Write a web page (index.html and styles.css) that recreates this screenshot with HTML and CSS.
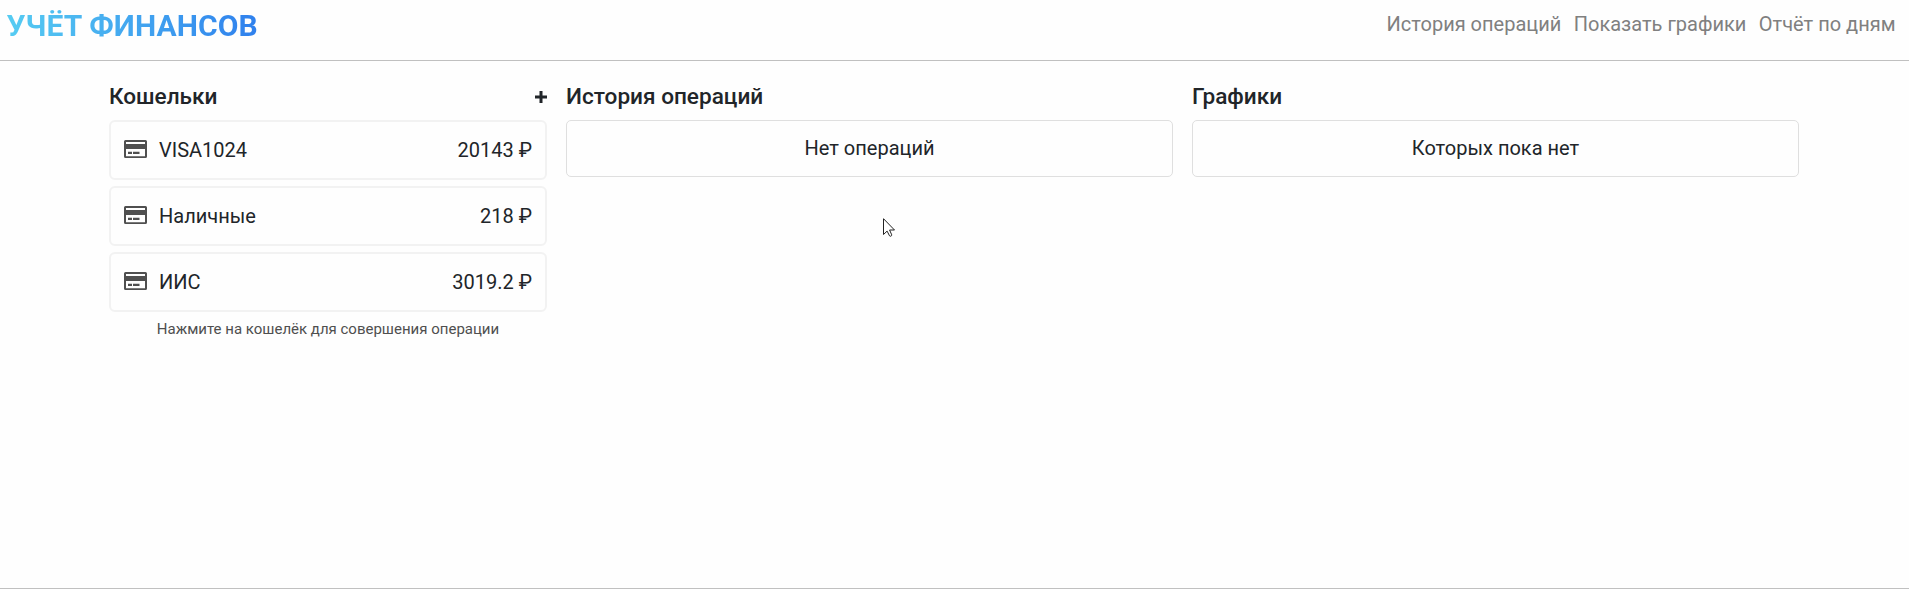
FILE: index.html
```html
<!DOCTYPE html>
<html lang="ru">
<head>
<meta charset="utf-8">
<title>Учёт финансов</title>
<link rel="stylesheet" href="styles.css">
</head>
<body>
<svg class="sprite" aria-hidden="true">
  <symbol id="card" viewBox="0 0 23 18">
    <path fill-rule="evenodd" d="M1.500 0h20A1.500 1.500 0 0 1 23 1.500v15a1.500 1.500 0 0 1-1.500 1.500h-20A1.500 1.500 0 0 1 0 16.500v-15A1.500 1.500 0 0 1 1.500 0ZM2 2v2h19V2ZM2 9v7.200h19V9ZM4 11.700h4v2.200H4ZM9 11.700h6.500v2.200H9Z"/>
  </symbol>
</svg>
<header class="header">
  <div class="logo">УЧЁТ ФИНАНСОВ</div>
  <nav class="nav">
    <a class="nav-link">История операций</a>
    <a class="nav-link">Показать графики</a>
    <a class="nav-link">Отчёт по дням</a>
  </nav>
</header>
<main class="main">
  <section>
    <div class="head">
      <h2 class="title">Кошельки</h2>
      <svg class="plus" viewBox="0 0 12 12"><path d="M4.500 0h3v4.500H12v3H7.500V12h-3V7.500H0v-3h4.500Z"/></svg>
    </div>
    <div class="wallets">
      <div class="wallet"><svg class="card"><use href="#card"/></svg><span class="name">VISA1024</span><span>20143 ₽</span></div>
      <div class="wallet"><svg class="card"><use href="#card"/></svg><span class="name">Наличные</span><span>218 ₽</span></div>
      <div class="wallet"><svg class="card"><use href="#card"/></svg><span class="name">ИИС</span><span>3019.2 ₽</span></div>
    </div>
    <p class="hint">Нажмите на кошелёк для совершения операции</p>
  </section>
  <section>
    <div class="head"><h2 class="title">История операций</h2></div>
    <div class="panel">Нет операций</div>
  </section>
  <section>
    <div class="head"><h2 class="title">Графики</h2></div>
    <div class="panel">Которых пока нет</div>
  </section>
</main>
<footer class="footer"></footer>
<svg class="cursor" viewBox="0 0 12 19"><path d="M.5.7v15.800l3.600-3.400 2.400 4.700c.8 1 2.500.2 2.200-1L6.600 12h4.900Z"/></svg>
</body>
</html>
```

FILE: styles.css
```css
* { box-sizing: border-box; }
body {
  margin: 0;
  height: 589px;
  display: flex;
  flex-direction: column;
  overflow: hidden;
  background: #fefefe;
  color: #212529;
  font: 20px/30px Roboto, sans-serif;
}
.sprite { position: absolute; width: 0; height: 0; }
.header {
  display: flex;
  justify-content: space-between;
  height: 61px;
  padding: 0 13.5px 0 6.5px;
  border-bottom: 1px solid #c0c0c0;
}
.logo {
  align-self: flex-start;
  padding-top: 3px;
  font-size: 30px;
  line-height: 46px;
  font-weight: 700;
  letter-spacing: .1px;
  background: linear-gradient(to right, #56ccf2, #2f80ed);
  -webkit-background-clip: text;
  background-clip: text;
  color: transparent;
}
.nav { display: flex; gap: 12.5px; padding-top: 9px; }
.nav-link { color: #808080; }
.main {
  flex: 1;
  display: grid;
  grid-template-columns: 438px 607px 607px;
  align-content: start;
  gap: 19px;
  padding: 20px 0 0 109px;
}
.head {
  display: flex;
  align-items: center;
  justify-content: space-between;
  height: 39px;
  padding-bottom: 8px;
}
.title { margin: 0; font-size: 22.6px; line-height: 31px; font-weight: 500; }
.plus { width: 12px; height: 12px; fill: #212529; }
.wallets { display: grid; gap: 6px; }
.wallet {
  display: flex;
  align-items: center;
  height: 60px;
  padding: 0 13px;
  border: 2px solid #f2f2f2;
  border-radius: 6px;
}
.card { width: 23px; height: 18px; margin: 0 12px 2px 0; fill: #4f4f4f; }
.name { flex: 1; }
.hint {
  margin: 6px 0 0;
  color: #4f4f4f;
  font-size: 15px;
  line-height: 23px;
  text-align: center;
}
.panel {
  height: 57px;
  border: 1px solid #dfdfdf;
  border-radius: 5px;
  line-height: 55px;
  text-align: center;
}
.footer { height: 1px; background: #c0c0c0; }
.cursor {
  position: absolute;
  left: 883px;
  top: 218px;
  width: 12px;
  height: 19px;
  fill: #fff;
  stroke: #222;
  stroke-width: 1;
}
```
